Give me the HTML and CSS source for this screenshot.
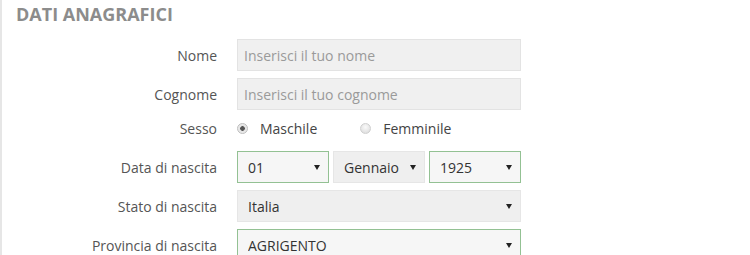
FILE: index.html
```html
<!DOCTYPE html>
<html lang="it">

<head>
    <meta charset="UTF-8">
    <meta name="viewport" content="width=device-width, initial-scale=1.0">
    <title>Dati anagrafici</title>
    <link rel="stylesheet" href="styles.css">
</head>

<body>
    <div class="panel">
        <h2 class="title">DATI ANAGRAFICI</h2>

        <form class="form">
            <div class="row">
                <label class="label" for="nome">Nome</label>
                <input class="field" id="nome" type="text" placeholder="Inserisci il tuo nome">
            </div>
            <div class="row">
                <label class="label" for="cognome">Cognome</label>
                <input class="field" id="cognome" type="text" placeholder="Inserisci il tuo cognome">
            </div>
            <div class="row row-radio">
                <span class="label">Sesso</span>
                <div class="radios">
                    <label class="radio"><input type="radio" name="sesso" checked> Maschile</label>
                    <label class="radio"><input type="radio" name="sesso"> Femminile</label>
                </div>
            </div>
            <div class="row">
                <span class="label">Data di nascita</span>
                <div class="date">
                    <div class="select valid">
                        <select>
                            <option>01</option>
                        </select>
                    </div>
                    <div class="select">
                        <select>
                            <option>Gennaio</option>
                        </select>
                    </div>
                    <div class="select valid">
                        <select>
                            <option>1925</option>
                        </select>
                    </div>
                </div>
            </div>
            <div class="row">
                <label class="label" for="stato">Stato di nascita</label>
                <div class="select">
                    <select id="stato">
                        <option>Italia</option>
                    </select>
                </div>
            </div>
            <div class="row">
                <label class="label" for="provincia">Provincia di nascita</label>
                <div class="select valid">
                    <select id="provincia">
                        <option>AGRIGENTO</option>
                    </select>
                </div>
            </div>
        </form>
    </div>
</body>

</html>
```

FILE: styles.css
```css
* {
    padding: 0;
    margin: 0;
    box-sizing: border-box;
}

body {
    background-color: #fff;
    font-family: "Open Sans", "Liberation Sans", sans-serif;
    color: #444;
}

.panel {
    height: 255px;
    overflow: hidden;
    border-left: 2px solid #e6e6e6;
    padding-left: 14px;
}

.title {
    padding-top: 2px;
    font: 700 18px/24px "Open Sans", sans-serif;
    color: #8c8c8c;
}

.form {
    display: flex;
    flex-direction: column;
    gap: 7px;
    margin-top: 13px;
}

.row {
    display: flex;
    align-items: center;
    gap: 20px;
    height: 32px;
}

.row-radio {
    height: 22px;
    margin-bottom: 5px;
}

.label {
    width: 201px;
    text-align: right;
    font-size: 14px;
    color: #555;
}

.field {
    width: 284px;
    height: 32px;
    padding: 0 6px;
    border: 1px solid #e3e3e3;
    background-color: #f0f0f0;
    font: 14px "Open Sans", sans-serif;
    color: #333;
    outline: none;
}

.field::placeholder {
    color: #9a9a9a;
}

.radios {
    display: flex;
    gap: 43px;
}

.radio {
    display: flex;
    align-items: center;
    gap: 12px;
    font-size: 14px;
    color: #444;
}

.radio input {
    appearance: none;
    width: 11px;
    height: 11px;
    margin-left: 0;
    border: 1px solid #cfcfcf;
    border-radius: 50%;
    background: radial-gradient(circle at 50% 35%, #fafafa, #d8d8d8);
}

.radio input:checked {
    border-color: #bdbdbd;
    background: radial-gradient(circle, #555 0, #555 2px, #e2e2e2 2.6px, #f4f4f4);
}

.date {
    display: grid;
    grid-template-columns: 1fr 1fr 1fr;
    gap: 4px;
    width: 284px;
}

.select {
    position: relative;
    width: 284px;
    height: 32px;
}

.date .select {
    width: auto;
}

.select::after {
    content: "";
    position: absolute;
    top: 14px;
    right: 9px;
    border-left: 3px solid transparent;
    border-right: 3px solid transparent;
    border-top: 5px solid #222;
    pointer-events: none;
}

.select select {
    appearance: none;
    width: 100%;
    height: 100%;
    padding: 0 20px 0 10px;
    border: 1px solid #e6e6e6;
    border-radius: 0;
    background-color: #efefef;
    font: 14px "Open Sans", sans-serif;
    color: #333;
    outline: none;
}

.valid select {
    border-color: #93c193;
    background-color: #f6f6f6;
}
```
